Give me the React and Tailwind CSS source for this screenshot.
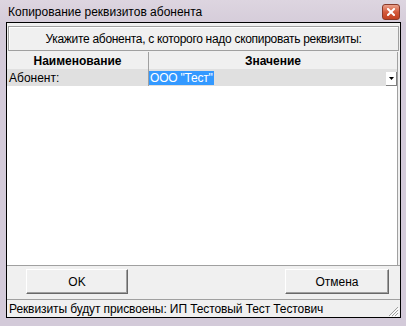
export default function App() {
  const ui = { fontFamily: '"Liberation Sans", Arial, sans-serif' };
  return (
    <div className="w-[406px] h-[326px] flex flex-col bg-[#d3cad9] overflow-hidden" style={ui}>
      {/* title bar */}
      <div className="h-[22px] flex items-center justify-between pl-[8px] pr-[6px] bg-gradient-to-b from-[#ddd5e0] to-[#d6cdda]">
        <span className="text-[12px] text-black leading-none pt-[2px]">Копирование реквизитов абонента</span>
        <div className="w-[18px] h-[16px] mt-[2px] rounded-[3px] border border-[#8b3a2a] bg-gradient-to-b from-[#e9a08c] via-[#d45a3c] to-[#c2401f] flex items-center justify-center">
          <svg width="8" height="8" viewBox="0 0 8 8">
            <path d="M1 1L7 7M7 1L1 7" stroke="#fff" strokeWidth="2" strokeLinecap="square" />
          </svg>
        </div>
      </div>

      {/* client area */}
      <div className="flex-1 ml-[6px] mr-[5px] mb-[8px] border border-black bg-[#f0f0f0] flex flex-col">
        <div className="mt-[3px] mx-[1px] h-[25px] border border-[#a0a0a0] shadow-[inset_1px_1px_0_#fff] flex items-center justify-center">
          <span className="text-[12px] text-black tracking-[-0.3px]">Укажите абонента, с которого надо скопировать реквизиты:</span>
        </div>

        {/* grid */}
        <div className="flex-1 mt-[1px] mr-[2px] bg-white border-r border-[#a0a0a0] flex flex-col">
          <div className="flex h-[17px] bg-[#f0f0f0] text-[12px] font-bold text-black">
            <div className="w-[142px] border-r border-[#a0a0a0] flex items-center justify-center">Наименование</div>
            <div className="flex-1 flex items-center justify-center">Значение</div>
          </div>
          <div className="flex h-[17px] bg-[#e0e0e0] text-[12px] text-black">
            <div className="w-[142px] border-r border-[#a0a0a0] flex items-center pl-[2px]">Абонент:</div>
            <div className="flex-1 flex items-center justify-between">
              <span className="bg-[#3399ff] text-white px-[1px] leading-[14px] tracking-[-0.2px]">ООО "Тест"</span>
              <div className="w-[11px] h-[14px] mt-[3px] bg-white border-r border-b border-[#808080] flex items-center justify-center">
                <svg width="5" height="3" viewBox="0 0 5 3">
                  <path d="M0 0H5L2.5 3Z" fill="#000" />
                </svg>
              </div>
            </div>
          </div>
        </div>

        {/* buttons */}
        <div className="h-[34px] border-t border-[#a0a0a0] flex items-start justify-between pt-[3px] pl-[19px] pr-[11px]">
          <button className="w-[102px] h-[25px] bg-[#f0f0f0] border border-[#fff] border-r-[#696969] border-b-[#696969] shadow-[inset_-1px_-1px_0_#a0a0a0] text-[12px] text-black">OK</button>
          <button className="w-[104px] h-[25px] bg-[#f0f0f0] border border-[#fff] border-r-[#696969] border-b-[#696969] shadow-[inset_-1px_-1px_0_#a0a0a0] text-[12px] text-black">Отмена</button>
        </div>

        {/* status bar */}
        <div className="h-[18px] border-t border-[#a0a0a0] flex items-center justify-between pl-[2px] pr-[1px]">
          <span className="text-[12px] text-black tracking-[-0.1px]">Реквизиты будут присвоены: ИП Тестовый Тест Тестович</span>
          <svg width="12" height="12" viewBox="0 0 12 12" className="self-end">
            <path d="M11 2L2 11M11 5L5 11M11 8L8 11" stroke="#a0a0a0" strokeWidth="1" />
            <path d="M12 3L3 12M12 6L6 12M12 9L9 12" stroke="#fff" strokeWidth="1" />
          </svg>
        </div>
      </div>
    </div>
  );
}
